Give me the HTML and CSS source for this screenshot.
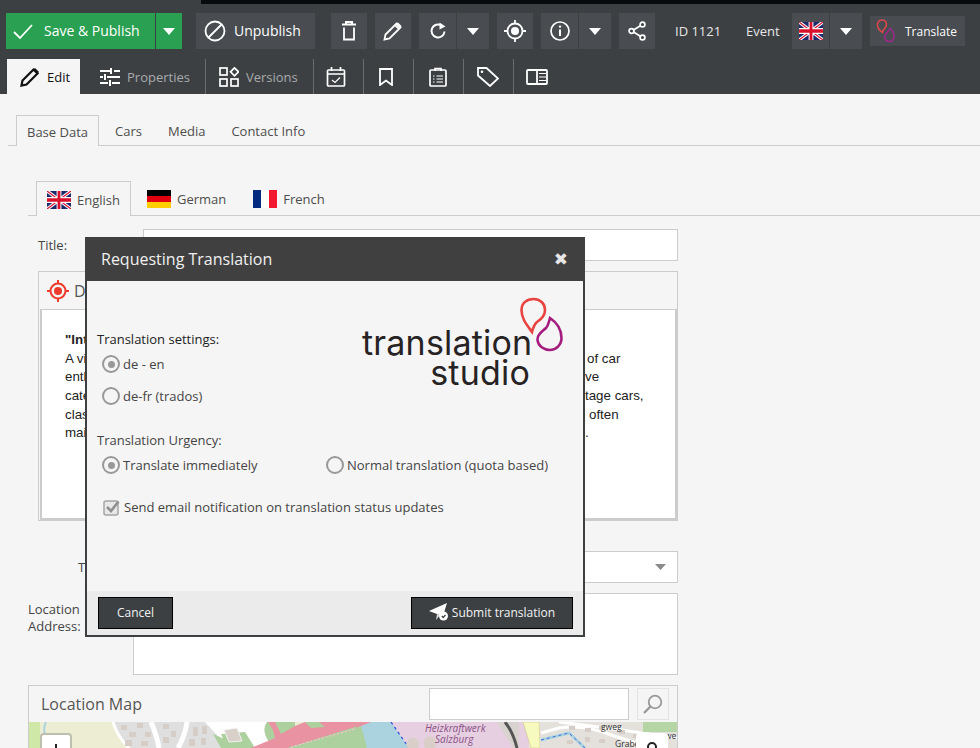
FILE: index.html
```html
<!DOCTYPE html>
<html>
<head>
    <meta charset="utf-8">
    <title>Requesting Translation</title>
    <link rel="stylesheet" href="styles.css">
</head>
<body>
    <svg class="defs" width="0" height="0">
        <symbol id="ukFlag" viewBox="0 0 60 36" preserveAspectRatio="none">
            <rect width="60" height="36" fill="#1a2a6c"/>
            <path d="M0 0L60 36M60 0L0 36" stroke="#fff" stroke-width="7"/>
            <path d="M0 0L60 36M60 0L0 36" stroke="#d8102c" stroke-width="2.5"/>
            <path d="M30 0V36M0 18H60" stroke="#fff" stroke-width="12"/>
            <path d="M30 0V36M0 18H60" stroke="#d8102c" stroke-width="7"/>
        </symbol>
        <symbol id="caret" viewBox="0 0 12 7"><path d="M0 0H12L6 7Z" fill="#fff"/></symbol>
    </svg>

    <div class="blackStrip"></div>
    <!--toolbar-->
    <div class="topbar">
        <div class="toolRow">
            <div class="btnGroup saveGroup">
                <button class="btn btnSave">
                    <svg width="22" height="22" viewBox="0 0 22 22"><path d="M2 12l6 6L20 5" fill="none" stroke="#fff" stroke-width="1.8"/></svg>
                    <span class="btnLabel">Save &amp; Publish</span>
                </button>
                <button class="btn btnSaveCaret"><svg width="12" height="7"><use href="#caret"/></svg></button>
            </div>
            <button class="btn btnWide">
                <svg width="22" height="22" viewBox="0 0 22 22"><circle cx="11" cy="11" r="9.5" fill="none" stroke="#fff" stroke-width="1.8"/><path d="M4.5 17.5L17.5 4.5" stroke="#fff" stroke-width="1.8"/></svg>
                <span class="btnLabel">Unpublish</span>
            </button>
            <button class="btn btnIcon gapLeft">
                <svg width="16" height="20" viewBox="0 0 16 20"><path d="M1 3.5H15M5 2.5V1H11V2.5" fill="none" stroke="#fff" stroke-width="2"/><path d="M3 6.5V18.5H13V6.5" fill="none" stroke="#fff" stroke-width="1.8"/></svg>
            </button>
            <button class="btn btnIcon">
                <svg width="20" height="20" viewBox="0 0 20 20"><path d="M1.5 18.5L2.5 13.5L13.5 2.5L17.5 6.5L6.5 17.5ZM12 4L16 8" fill="none" stroke="#fff" stroke-width="1.8"/><path d="M15 1.500L18.500 5L17.500 6.500L13.500 2.500Z" fill="#fff"/></svg>
            </button>
            <div class="btnGroup">
                <button class="btn btnIcon btnWider">
                    <svg width="18" height="18" viewBox="0 0 18 18"><path d="M15.5 9.5A6.5 6.5 0 1 1 12.5 3.5" fill="none" stroke="#fff" stroke-width="2"/><path d="M10.5 0.5L16.5 4.5L10.5 7.5Z" fill="#fff"/></svg>
                </button>
                <button class="btn btnCaret"><svg width="12" height="7"><use href="#caret"/></svg></button>
            </div>
            <button class="btn btnIcon">
                <svg width="22" height="22" viewBox="0 0 22 22"><circle cx="11" cy="11" r="7.5" fill="none" stroke="#fff" stroke-width="1.8"/><circle cx="11" cy="11" r="4" fill="#fff"/><path d="M11 0V4M11 18V22M0 11H4M18 11H22" stroke="#fff" stroke-width="1.8"/></svg>
            </button>
            <div class="btnGroup">
                <button class="btn btnIcon btnWider">
                    <svg width="20" height="20" viewBox="0 0 20 20"><circle cx="10" cy="10" r="9" fill="none" stroke="#fff" stroke-width="1.7"/><path d="M10 8.5V15" stroke="#fff" stroke-width="2"/><circle cx="10" cy="5.6" r="1.2" fill="#fff"/></svg>
                </button>
                <button class="btn btnCaret"><svg width="12" height="7"><use href="#caret"/></svg></button>
            </div>
            <button class="btn btnIcon">
                <svg width="18" height="20" viewBox="0 0 18 20"><path d="M13.5 4L4 10L13.5 16" fill="none" stroke="#fff" stroke-width="1.7"/><circle cx="14.5" cy="3.5" r="2.4" fill="#3c4043" stroke="#fff" stroke-width="1.7"/><circle cx="3.5" cy="10" r="2.4" fill="#3c4043" stroke="#fff" stroke-width="1.7"/><circle cx="14.5" cy="16.5" r="2.4" fill="#3c4043" stroke="#fff" stroke-width="1.7"/></svg>
            </button>
            <span class="idText">ID 1121</span>
            <span class="typeText">Event</span>
            <div class="btnGroup">
                <button class="btn btnIcon btnFlag"><svg width="24" height="18"><use href="#ukFlag"/></svg></button>
                <button class="btn btnCaret"><svg width="12" height="7"><use href="#caret"/></svg></button>
            </div>
            <button class="btn btnTranslate">
                <svg width="20" height="26" viewBox="0 0 20 26"><path d="M6.5 14.5C3 12 1 9.5 1.5 6C2 3 4.5 1.500 7 2C9.8 2.600 11 5 10.200 8C9.700 9.800 8 11 7 12.500Z" fill="none" stroke="#e2474a" stroke-width="1.500"/><path d="M14 10.500C17 13 18.500 15.500 18 19C17.600 22 15 24 12.500 23.500C9.800 23 8.500 21 9 18C9.400 15.500 12 14 14 10.500Z" fill="none" stroke="#a2278f" stroke-width="1.500"/></svg>
                Translate
            </button>
        </div>
        <div class="viewTabs">
            <div class="viewTab viewTabOn">
                <svg width="20" height="20" viewBox="0 0 20 20"><path d="M1.5 18.5L2.5 13.5L13.5 2.5L17.5 6.5L6.5 17.5Z" fill="none" stroke="#111" stroke-width="2.200"/><path d="M15 1L19 5L17.5 6.5L13.5 2.5Z" fill="#111"/></svg>
                Edit
            </div>
            <div class="viewTab viewTabLine">
                <svg width="20" height="18" viewBox="0 0 20 18"><path d="M0 3H10M14 3H20M0 9H3M7 9H20M0 15H8M12 15H20" stroke="#fff" stroke-width="2"/><path d="M11 0V6M5 6V12M10 12V18" stroke="#fff" stroke-width="2"/></svg>
                Properties
            </div>
            <div class="viewTab viewTabLine">
                <svg width="20" height="20" viewBox="0 0 20 20"><g fill="none" stroke="#fff" stroke-width="1.7"><rect x="1" y="1" width="7" height="7"/><rect x="1" y="12" width="7" height="7"/><rect x="12" y="12" width="7" height="7"/><path d="M15.5 0.8L19.5 4.8L15.5 8.8L11.5 4.8Z"/></g></svg>
                Versions
            </div>
            <div class="viewTab viewTabLine viewTabIcon iconLeft">
                <svg width="20" height="20" viewBox="0 0 20 20"><g fill="none" stroke="#fff" stroke-width="1.7"><rect x="1.5" y="3" width="17" height="16" rx="1"/><path d="M1.5 7H18.5M5.5 0V4M14.5 0V4"/><path d="M6 13L9 15.5L14 10.5" stroke-width="1.2"/></g></svg>
            </div>
            <div class="viewTab viewTabLine viewTabIcon iconLeft">
                <svg width="14" height="18" viewBox="0 0 14 18"><path d="M1 1H13V17L7 12.5L1 17Z" fill="none" stroke="#fff" stroke-width="1.8"/></svg>
            </div>
            <div class="viewTab viewTabLine viewTabIcon">
                <svg width="18" height="20" viewBox="0 0 18 20"><g fill="none" stroke="#fff" stroke-width="1.7"><rect x="1" y="3" width="16" height="16" rx="1"/><path d="M6 4V1.5H12V4"/><path d="M7.5 9H14M7.5 12H14M7.5 15H14M4 9H5.5M4 12H5.5M4 15H5.5" stroke-width="1.2"/></g></svg>
            </div>
            <div class="viewTab viewTabLine viewTabIcon">
                <svg width="22" height="20" viewBox="0 0 22 20"><path d="M1 1H9.5L21 11.5L13 19L1 8.5Z" fill="none" stroke="#fff" stroke-width="1.8"/><circle cx="5" cy="4.8" r="1.3" fill="#fff"/></svg>
            </div>
            <div class="viewTab viewTabIcon viewTabLast">
                <svg width="22" height="16" viewBox="0 0 22 16"><rect x="1" y="1" width="20" height="14" rx="1" fill="none" stroke="#fff" stroke-width="1.8"/><path d="M11 1V15" stroke="#fff" stroke-width="1.8"/><path d="M13 4.5H20M13 8H20M13 11.5H20" stroke="#fff" stroke-width="1.2"/></svg>
            </div>
        </div>
    </div>

    <!--form behind the dialog-->
    <div class="mainTabs">
        <div class="tab tabOn">Base Data</div>
        <div class="tab">Cars</div>
        <div class="tab">Media</div>
        <div class="tab">Contact Info</div>
    </div>

    <div class="formArea">
        <div class="langTabs">
            <div class="tab tabOn tabLang"><svg width="24" height="18"><use href="#ukFlag"/></svg>English</div>
            <div class="tab tabLang">
                <svg width="24" height="18" viewBox="0 0 3 3" preserveAspectRatio="none"><rect width="3" height="1" fill="#000"/><rect y="1" width="3" height="1" fill="#e0000f"/><rect y="2" width="3" height="1" fill="#ffce00"/></svg>German
            </div>
            <div class="tab tabLang">
                <svg width="24" height="18" viewBox="0 0 3 3" preserveAspectRatio="none"><rect width="1" height="3" fill="#002a7f"/><rect x="1" width="1" height="3" fill="#fff"/><rect x="2" width="1" height="3" fill="#f31830"/></svg>French
            </div>
        </div>

        <div class="formRow titleRow">
            <label class="titleLabel">Title:</label>
            <div class="inputBox titleInput"></div>
        </div>

        <div class="descBox">
            <div class="descHead">
                <svg width="22" height="22" viewBox="0 0 22 22"><circle cx="11" cy="11" r="7.5" fill="none" stroke="#ee3a2c" stroke-width="2"/><circle cx="11" cy="11" r="4" fill="#ee3a2c"/><path d="M11 0V4M11 18V22M0 11H4M18 11H22" stroke="#ee3a2c" stroke-width="2"/></svg>
                <span>D</span>
            </div>
            <div class="descText">
                <div class="textLine"><b>"Int</b><span></span></div>
                <div class="textLine"><span>A vi</span><span class="push2">of car</span></div>
                <div class="textLine"><span>enth</span><span>ve</span></div>
                <div class="textLine"><span>cate</span><span>tage cars,</span></div>
                <div class="textLine"><span>clas</span><span class="push4">often</span></div>
                <div class="textLine"><span>mai</span><span>.</span></div>
            </div>
        </div>

        <div class="formRow typeRow">
            <label class="typeLabel">T</label>
            <div class="inputBox typeInput"><svg width="11" height="6"><path d="M0 0H11L5.5 6Z" fill="#8a8a8a"/></svg></div>
        </div>

        <div class="formRow addressRow">
            <label class="addressLabel">Location Address:</label>
            <div class="inputBox addressInput"></div>
        </div>

        <div class="mapPanel">
            <div class="mapHead">
                <span class="mapTitle">Location Map</span>
                <div class="inputBox mapSearch"></div>
                <div class="mapBtn">
                    <svg width="20" height="20" viewBox="0 0 20 20"><circle cx="12" cy="8" r="6.3" fill="none" stroke="#9a9a9a" stroke-width="1.8"/><path d="M7.5 12.5L1 19" stroke="#9a9a9a" stroke-width="2.4"/></svg>
                </div>
            </div>
            <div class="mapView">
                <svg class="mapArt" width="648" height="26" viewBox="0 0 648 26">
                    <rect width="648" height="26" fill="#ededd3"/>
                    <rect width="11" height="26" fill="#cfe8a8"/>
                    <path d="M17 0Q14 6 16 12" fill="none" stroke="#aad3df" stroke-width="2"/>
                    <!--housing on the left-->
                    <path d="M84 0Q88 14 100 26H225L176 0Z" fill="#e0dfdf"/>
                    <path d="M84 0Q88 14 100 26" fill="none" stroke="#fff" stroke-width="3"/>
                    <path d="M122 0Q128 14 130 26M158 0Q156 14 149 26" fill="none" stroke="#fff" stroke-width="5"/>
                    <g fill="#d5cdc6"><rect x="92" y="3" width="6" height="5"/><rect x="100" y="10" width="7" height="5"/><rect x="96" y="18" width="7" height="6"/><rect x="108" y="1" width="6" height="5"/><rect x="116" y="10" width="6" height="5"/><rect x="112" y="19" width="7" height="5"/><rect x="134" y="2" width="6" height="5"/><rect x="142" y="9" width="5" height="6"/><rect x="134" y="15" width="6" height="6"/><rect x="164" y="5" width="5" height="9"/><rect x="173" y="4" width="5" height="8"/><rect x="160" y="17" width="6" height="7"/><rect x="172" y="16" width="5" height="7"/></g>
                    <!--green and motorway-->
                    <path d="M176 0H245V14L232 26H200Z" fill="#fff"/>
                    <path d="M184 12L216 26H192Z" fill="#add19e"/>
                    <path d="M192 12L216 10L226 26H198Z" fill="#add19e"/>
                    <path d="M195 8L208 6L213 19L200 20Z" fill="#d9d0c9" stroke="#f2f2f2"/>
                    <path d="M238 0H266V12L240 20Q232 8 238 0Z" fill="#add19e"/>
                    <path d="M222 26L246 16L244 8L239 0H246L252 12L266 4L276 0H342L282 26Z" fill="#e892a2"/>
                    <path d="M276 0H290L296 5L282 6Z" fill="#add19e"/>
                    <path d="M258 26L326 5L340 0V26Z" fill="#add19e"/>
                    <path d="M262 25L326 7" fill="none" stroke="#f7c4cb" stroke-width="1.200" stroke-dasharray="2 2"/>
                    <!--river and works-->
                    <path d="M324 26L338 8V26Z" fill="#add19e"/>
                    <path d="M331 0H362L380 26H338Z" fill="#aad3df"/>
                    <path d="M331 0H342L327 6Z" fill="#e892a2"/>
                    <path d="M362 0H500V26H380Z" fill="#e6cfe0"/>
                    <path d="M362 0L380 26" fill="none" stroke="#2a4fe0" stroke-width="1.200" stroke-dasharray="3 3"/>
                    <circle cx="384" cy="22" r="6.500" fill="#d9cfc8"/><circle cx="401" cy="21" r="6.500" fill="#d9cfc8"/>
                    <path d="M468 0H490V26H484Z" fill="#d8d3cf"/>
                    <path d="M476 0Q484 10 488 26" fill="none" stroke="#555" stroke-width="3"/>
                    <path d="M494 0H510L511 26H502Z" fill="#f7fabf" stroke="#cfc88a" stroke-width=".6"/>
                    <!--housing on the right-->
                    <path d="M511 0H648V26H511Z" fill="#e4e1dd"/>
                    <path d="M512 11L530 6Q556 2 585 14L625 26" fill="none" stroke="#fff" stroke-width="3"/>
                    <path d="M512 18L540 11L556 26" fill="none" stroke="#aad3df" stroke-width="3"/>
                    <path d="M512 18L540 11L556 26" fill="none" stroke="#2a4fe0" stroke-width=".8" stroke-dasharray="3 3"/>
                    <path d="M530 0Q580 6 648 16" fill="none" stroke="#fff" stroke-width="3"/>
                    <g fill="#d5cdc6"><rect x="540" y="4" width="6" height="4"/><rect x="556" y="6" width="6" height="4"/><rect x="570" y="4" width="6" height="4"/><rect x="538" y="18" width="6" height="4"/><rect x="556" y="15" width="5" height="5"/><rect x="570" y="17" width="6" height="4"/><rect x="590" y="8" width="6" height="4"/><rect x="604" y="12" width="6" height="4"/></g>
                    <rect x="614" y="0" width="34" height="10" fill="#b5d5a5"/>
                    <text x="396" y="10" class="mapText">Heizkraftwerk</text>
                    <text x="406" y="21" class="mapText">Salzburg</text>
                    <text x="572" y="8" class="mapRoad">gweg</text>
                    <text x="586" y="25" class="mapRoad">Grabe</text>
                    <text x="636" y="17" class="mapRoad">we</text>
                </svg>
                <div class="mapCtl mapZoom"><span class="ctlMark"></span></div>
                <div class="mapCtl mapPerson"><span class="ctlHead"></span></div>
            </div>
        </div>
    </div>

    <!--dialog-->
    <div class="modal">
        <div class="modalHead">
            <span>Requesting Translation</span>
            <span class="modalClose">&#10006;</span>
        </div>
        <div class="modalBody">
            <div class="settingsTop">
                <div class="settingsList">
                    <div class="groupLabel groupFirst">Translation settings:</div>
                    <div class="radioRow"><span class="radio radioOn"></span>de - en</div>
                    <div class="radioRow"><span class="radio"></span>de-fr (trados)</div>
                </div>
                <div class="logo">
                    <svg class="logoDrops" width="44" height="56" viewBox="0 0 44 56">
                        <path d="M13 35C8 28 2.500 22 2.500 13C2.500 6 8 2 14.500 2C21 2 26 6.500 26 13C26 19 22 22.500 18 25C15.500 27 14 31 13 35Z" fill="none" stroke="#e9433f" stroke-width="2.600"/>
                        <path d="M31 21C37 25 42.500 32 42.500 41C42.500 48 37 53 31 53C25 53 19 49 18.500 43C18 37 24 34 27 31C29 29 30 25 31 21Z" fill="none" stroke="#a51c7f" stroke-width="2.600"/>
                    </svg>
                    <div class="logoText">translation</div>
                    <div class="logoText logoStudio">studio</div>
                </div>
            </div>
            <div class="groupLabel groupSecond">Translation Urgency:</div>
            <div class="urgencyRow">
                <div class="radioRow urgencyCol"><span class="radio radioOn"></span>Translate immediately</div>
                <div class="radioRow"><span class="radio"></span>Normal translation (quota based)</div>
            </div>
            <div class="checkRow">
                <svg width="17" height="17" viewBox="0 0 17 17"><rect x="1" y="2" width="14" height="14" rx="2" fill="#e8e8e8" stroke="#a5a5a5" stroke-width="1.500"/><path d="M4 8L8 12L15.500 2.500" fill="none" stroke="#8f8f8f" stroke-width="2.600"/></svg>
                Send email notification on translation status updates
            </div>
        </div>
        <div class="modalFoot">
            <button class="footBtn cancelBtn">Cancel</button>
            <button class="footBtn submitBtn">
                <svg width="20" height="18" viewBox="0 0 20 18"><path d="M0 8L18 0L14 13L8 11Z" fill="#fff"/><path d="M8 11L7 17L11 12Z" fill="#ddd"/><circle cx="14.500" cy="13" r="4.500" fill="#fff"/><path d="M12.800 13L14.300 14.500L16.500 11.800" fill="none" stroke="#3c4043" stroke-width="1.200"/></svg>
                Submit translation
            </button>
        </div>
    </div>
</body>
</html>
```

FILE: styles.css
```css
* {
    box-sizing: border-box;
}
html, body {
    height: 748px;
    overflow: hidden;
}
body {
    margin: 0;
    background-color: #f5f5f5;
    font-family: "Open Sans", "Noto Sans", sans-serif;
    font-size: 13px;
    color: #444;
    position: relative;
}
button {
    font-family: inherit;
    border: 0;
    padding: 0;
}
.defs {
    position: absolute;
}
.blackStrip {
    position: absolute;
    top: 0;
    left: 201px;
    right: 0;
    height: 4px;
    background-color: #080b0e;
}

/* toolbar */
.topbar {
    height: 94px;
    background-color: #3c4043;
    padding-top: 13px;
}
.toolRow {
    display: flex;
    align-items: center;
    gap: 8px;
    padding-left: 6px;
    height: 36px;
}
.btnGroup {
    display: flex;
    gap: 1px;
}
.btn {
    height: 36px;
    background-color: #494d51;
    color: #fff;
    font-size: 14px;
    display: flex;
    align-items: center;
    justify-content: center;
}
.btnLabel {
    padding-bottom: 2px;
}
.btnIcon {
    width: 36px;
}
.btnWider {
    width: 37px;
}
.btnCaret {
    width: 32px;
}
.saveGroup {
    margin-right: 6px;
}
.btnSave {
    width: 149px;
    background-color: #2aa152;
    gap: 10px;
    padding-left: 6px;
    justify-content: flex-start;
}
.btnSaveCaret {
    width: 26px;
    background-color: #2aa152;
}
.btnWide {
    width: 119px;
    gap: 8px;
    padding-left: 8px;
    justify-content: flex-start;
}
.gapLeft {
    margin-left: 8px;
}
.idText {
    color: #e6e6e6;
    font-size: 13px;
    margin-left: 12px;
    width: 63px;
}
.typeText {
    color: #e6e6e6;
    font-size: 13px;
    width: 38px;
}
.btnFlag {
    width: 37px;
}
.btnTranslate {
    width: 95px;
    height: 30px;
    font-size: 12px;
    gap: 9px;
    justify-content: flex-start;
    padding-left: 6px;
}
.viewTabs {
    display: flex;
    height: 35px;
    margin-top: 10px;
    padding-left: 7px;
}
.viewTab {
    display: flex;
    align-items: center;
    gap: 7px;
    color: #a9abad;
    font-size: 13px;
}
.viewTabOn {
    width: 73px;
    padding-left: 13px;
    background-color: #f5f5f5;
    color: #111;
}
.viewTabLine {
    padding: 0 15px 0 20px;
    border-right: 1px solid #6a6d70;
}
.viewTabLine + .viewTabLine {
    padding-left: 13px;
}
.viewTabIcon {
    width: 50px;
    justify-content: center;
    padding: 0 !important;
}
.iconLeft {
    padding-right: 4px !important;
}
.viewTabLast {
    width: 46px;
}

/* tabs */
.mainTabs, .langTabs {
    display: flex;
    border-bottom: 1px solid #ccc;
}
.mainTabs {
    margin: 21px 0 0 8px;
    height: 31px;
    padding-left: 8px;
}
.tab {
    height: 31px;
    padding: 0 11px;
    line-height: 32px;
    color: #4d4d4d;
    font-size: 13px;
    margin-right: 4px;
}
.tabOn {
    background-color: #f5f5f5;
    border: 1px solid #ccc;
    border-bottom: 0;
    padding: 0 10px;
    margin-right: 5px;
}
.formArea {
    padding-left: 28px;
}
.langTabs {
    margin-top: 35px;
    height: 35px;
    padding-left: 8px;
}
.tabLang {
    height: 35px;
    display: flex;
    align-items: center;
    gap: 6px;
    padding-top: 1px;
    line-height: 20px;
    margin-right: 5px;
}

/* form */
.formRow {
    display: flex;
    width: 650px;
}
.inputBox {
    background-color: #fff;
    border: 1px solid #ccc;
}
.titleRow {
    margin-top: 13px;
    align-items: center;
}
.titleLabel {
    width: 115px;
    padding-left: 10px;
}
.titleInput {
    width: 535px;
    height: 32px;
}
.descBox {
    margin: 10px 0 0 10px;
    width: 640px;
    height: 250px;
    border: 1px solid #ccc;
    background-color: #f5f5f5;
}
.descHead {
    height: 37px;
    display: flex;
    align-items: center;
    gap: 5px;
    padding-left: 8px;
    font-size: 16px;
    color: #555;
}
.descText {
    height: 211px;
    margin-left: 1px;
    background-color: #fff;
    border: 2px solid #ccc;
    border-width: 1px 2px 2px 2px;
    padding: 21px 0 0 23px;
    font-family: "Liberation Sans", Arial, sans-serif;
    font-size: 13.33px;
    line-height: 18.67px;
    color: #222;
}
.textLine {
    display: grid;
    grid-template-columns: 520px auto;
    white-space: nowrap;
}
.push2 {
    padding-left: 2px;
}
.push4 {
    padding-left: 4px;
}
.typeRow {
    margin-top: 30px;
}
.typeLabel {
    width: 115px;
    padding: 7px 0 0 50px;
}
.typeInput {
    width: 535px;
    height: 32px;
    display: flex;
    align-items: center;
    justify-content: flex-end;
    padding-right: 11px;
}
.addressRow {
    margin-top: 10px;
}
.addressLabel {
    width: 105px;
    padding: 8px 40px 0 0;
    line-height: 17px;
}
.addressInput {
    width: 545px;
    height: 82px;
}
.mapPanel {
    margin-top: 10px;
    width: 650px;
    border: 1px solid #ccc;
}
.mapHead {
    height: 36px;
    display: flex;
    align-items: center;
    padding: 0 8px 0 12px;
}
.mapTitle {
    font-size: 16px;
    flex: 1;
    color: #555;
}
.mapSearch {
    width: 200px;
    height: 32px;
}
.mapBtn {
    width: 32px;
    height: 32px;
    margin-left: 8px;
    border: 1px solid #e2e2e2;
    display: flex;
    align-items: center;
    justify-content: center;
}
.mapView {
    position: relative;
    height: 40px;
}
.mapArt {
    display: block;
}
.mapText {
    font-family: "Open Sans", sans-serif;
    font-size: 10px;
    font-style: italic;
    fill: #8a4f86;
}
.mapRoad {
    font-family: "Open Sans", sans-serif;
    font-size: 8.5px;
    fill: #333;
}
.mapCtl {
    position: absolute;
    top: 11px;
    width: 32px;
    height: 32px;
    background-color: #fff;
    border-radius: 4px;
}
.mapZoom {
    left: 11px;
    border: 2px solid #bcbfae;
}
.mapPerson {
    left: 607px;
}
.ctlMark {
    display: block;
    width: 2px;
    height: 10px;
    background-color: #222;
    margin: 9px auto 0;
}
.ctlHead {
    display: block;
    width: 10px;
    height: 10px;
    border: 2px solid #222;
    border-radius: 50%;
    margin: 9px auto 0;
}

/* dialog */
.modal {
    position: absolute;
    top: 237px;
    left: 85px;
    width: 500px;
    height: 400px;
    border: 2px solid #3c4043;
    border-top: 0;
    background-color: #f5f5f5;
    display: flex;
    flex-direction: column;
}
.modalHead {
    height: 44px;
    margin: 0 -2px;
    padding: 0 17px 0 16px;
    background-color: #404040;
    color: #f0f0f0;
    font-size: 16px;
    display: flex;
    align-items: center;
    justify-content: space-between;
}
.modalClose {
    font-family: "DejaVu Sans", sans-serif;
    font-size: 17px;
    line-height: 20px;
    color: #e6e6e6;
}
.modalBody {
    flex: 1;
    padding: 16px 20px 0 10px;
}
.settingsTop {
    display: flex;
    justify-content: space-between;
    height: 127px;
}
.groupLabel {
    line-height: 16px;
}
.groupFirst {
    margin-top: 34px;
    color: #222;
}
.groupSecond {
    margin-top: 8px;
}
.radioRow {
    display: flex;
    align-items: center;
    gap: 3px;
    height: 32px;
    padding-left: 5px;
    white-space: nowrap;
}
.groupFirst + .radioRow {
    margin-top: 1px;
}
.radio {
    width: 18px;
    height: 18px;
    border: 2px solid #999;
    border-radius: 50%;
    background-color: #f5f5f5;
    display: flex;
    align-items: center;
    justify-content: center;
}
.radioOn::after {
    content: "";
    width: 7px;
    height: 7px;
    border-radius: 50%;
    background-color: #999;
}
.urgencyRow {
    display: flex;
    margin-top: 1px;
}
.urgencyCol {
    width: 224px;
}
.checkRow {
    display: flex;
    align-items: center;
    gap: 4px;
    margin-top: 16px;
    padding-left: 6px;
    height: 20px;
    white-space: nowrap;
}
.logo {
    position: relative;
    width: 201px;
    height: 90px;
    text-align: right;
    padding-top: 31px;
}
.logoDrops {
    position: absolute;
    top: 0;
    right: 0;
}
.logoText {
    width: 168px;
    font-family: "Inter", "Open Sans", sans-serif;
    font-size: 34px;
    line-height: 30px;
    color: #272324;
    letter-spacing: 0.2px;
}
.modalFoot {
    height: 44px;
    background-color: #ebebeb;
    display: flex;
    justify-content: space-between;
    align-items: center;
    padding: 0 10px 0 11px;
}
.footBtn {
    height: 32px;
    background-color: #3c4043;
    border: 1px solid #000;
    color: #f2f2f2;
    font-size: 12px;
    display: flex;
    align-items: center;
    justify-content: center;
    gap: 3px;
    padding-bottom: 2px;
}
.cancelBtn {
    width: 75px;
}
.submitBtn {
    width: 162px;
}
```
